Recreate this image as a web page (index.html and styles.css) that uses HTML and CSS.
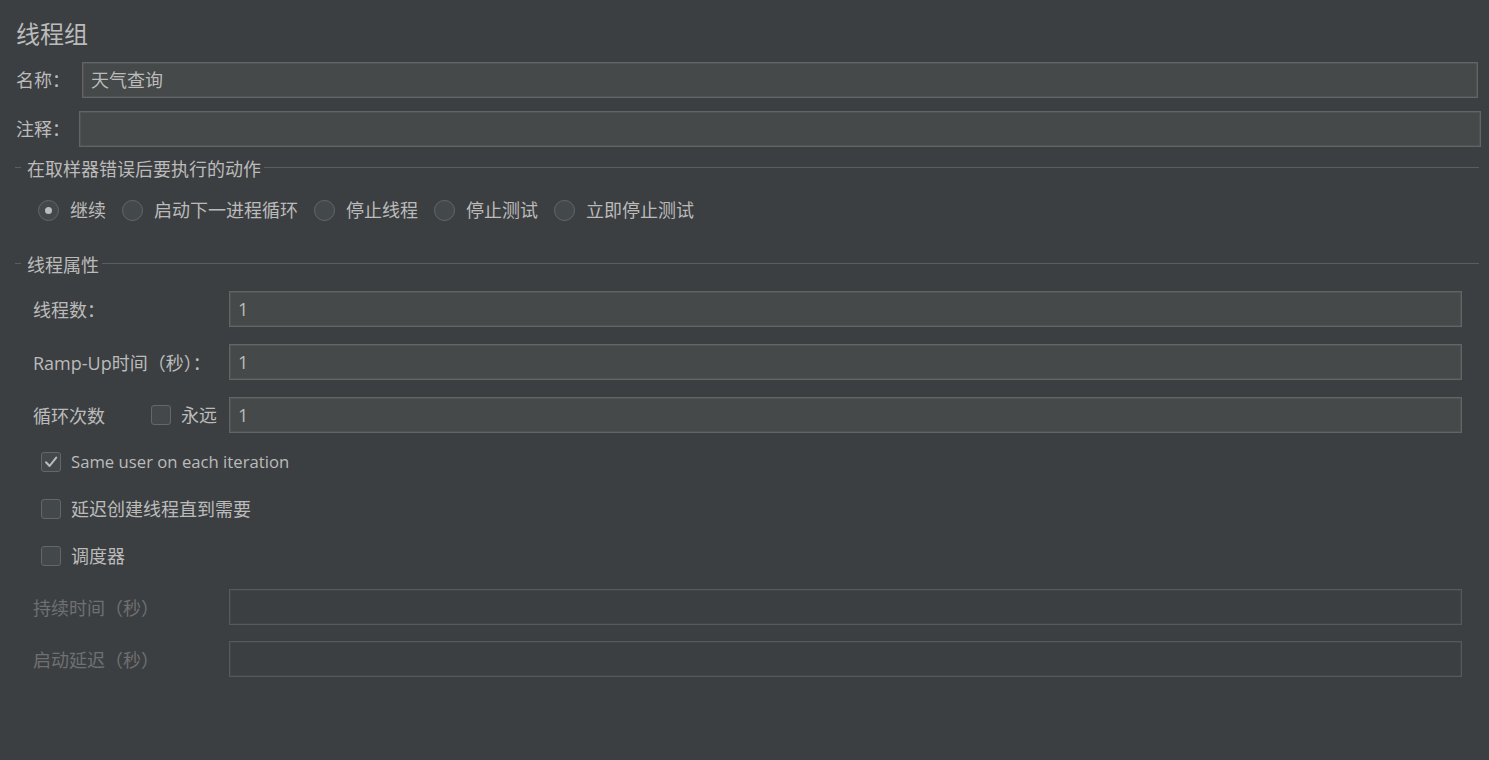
FILE: index.html
```html
<!DOCTYPE html>
<html lang="zh-CN">
<head>
<meta charset="utf-8">
<title>线程组</title>
<link rel="stylesheet" href="styles.css">
</head>
<body>
<div class="panel">
  <div class="title">线程组</div>

  <div class="row row-name">
    <span class="label">名称：</span>
    <div class="field">天气查询</div>
  </div>
  <div class="row row-comment">
    <span class="label">注释：</span>
    <div class="field"></div>
  </div>

  <div class="legend legend-first">
    <span class="legend-dash"></span>
    <span class="legend-text">在取样器错误后要执行的动作</span>
    <span class="legend-line"></span>
  </div>

  <div class="radios">
    <span class="radio-item"><span class="radio checked"></span><span class="radio-label">继续</span></span>
    <span class="radio-item"><span class="radio"></span><span class="radio-label">启动下一进程循环</span></span>
    <span class="radio-item"><span class="radio"></span><span class="radio-label">停止线程</span></span>
    <span class="radio-item"><span class="radio"></span><span class="radio-label">停止测试</span></span>
    <span class="radio-item"><span class="radio"></span><span class="radio-label">立即停止测试</span></span>
  </div>

  <div class="legend legend-second">
    <span class="legend-dash"></span>
    <span class="legend-text">线程属性</span>
    <span class="legend-line"></span>
  </div>

  <div class="props">
    <div class="prop-label">线程数：</div>
    <div class="field">1</div>
    <div class="prop-label">Ramp-Up时间（秒）：</div>
    <div class="field">1</div>
    <div class="prop-label loop">
      <span>循环次数</span>
      <span class="check-inline"><span class="checkbox"></span><span class="check-label">永远</span></span>
    </div>
    <div class="field">1</div>
  </div>

  <div class="checks">
    <div class="check-row">
      <span class="checkbox">
        <svg width="20" height="20" viewBox="0 0 20 20"><path d="M5 10.2 L8.6 14 L15.2 5.6" fill="none" stroke="#bcbcbc" stroke-width="2" stroke-linecap="round" stroke-linejoin="round"/></svg>
      </span>
      <span class="check-label latin">Same user on each iteration</span>
    </div>
    <div class="check-row">
      <span class="checkbox"></span>
      <span class="check-label">延迟创建线程直到需要</span>
    </div>
    <div class="check-row">
      <span class="checkbox"></span>
      <span class="check-label">调度器</span>
    </div>
  </div>

  <div class="props props-disabled">
    <div class="prop-label">持续时间（秒）</div>
    <div class="field"></div>
    <div class="prop-label">启动延迟（秒）</div>
    <div class="field"></div>
  </div>
</div>
</body>
</html>
```

FILE: styles.css
```css
html, body {
  margin: 0;
  padding: 0;
  background: #3c3f41;
}

body {
  width: 1489px;
  height: 760px;
  overflow: hidden;
  color: #bbbbbb;
  font-family: "Open Sans", "Noto Sans CJK SC", sans-serif;
  font-size: 18px;
}

.panel {
  padding-top: 20px;
}

.title {
  height: 28px;
  line-height: 28px;
  font-size: 24px;
  padding-left: 16px;
}

.row {
  display: flex;
  align-items: center;
  height: 36px;
  padding-left: 16px;
}

.row-name {
  margin-top: 14px;
  padding-right: 11px;
}

.row-name .label {
  width: 66px;
}

.row-comment {
  margin-top: 13px;
  padding-right: 8px;
}

.row-comment .label {
  width: 63px;
}

.label {
  flex: none;
  line-height: 36px;
}

.field {
  box-sizing: border-box;
  flex: 1;
  height: 36px;
  line-height: 34px;
  padding-left: 8px;
  background: #45494a;
  border: 1px solid #646464;
  box-shadow: inset 0 0 0 1px #4f5354;
  color: #bbbbbb;
  white-space: nowrap;
  overflow: hidden;
}

.legend {
  display: flex;
  align-items: center;
  height: 20px;
  padding-left: 15px;
  padding-right: 10px;
}

.legend-first {
  margin-top: 10px;
}

.legend-second {
  margin-top: 32px;
}

.legend-dash {
  flex: none;
  width: 6px;
  height: 1px;
  background: #5b5e60;
}

.legend-text {
  flex: none;
  margin-left: 6px;
  margin-right: 3px;
  line-height: 20px;
  padding-top: 4px;
}

.legend-line {
  flex: 1;
  height: 1px;
  background: #5b5e60;
}

.radios {
  display: flex;
  align-items: center;
  height: 22px;
  margin-top: 22px;
  padding-left: 38px;
  gap: 16px;
}

.radio-item {
  display: flex;
  align-items: center;
}

.radio {
  box-sizing: border-box;
  width: 21px;
  height: 21px;
  border-radius: 50%;
  border: 1px solid #666666;
  background: #43494a;
  position: relative;
  flex: none;
}

.radio.checked::after {
  content: "";
  position: absolute;
  left: 6px;
  top: 6px;
  width: 7px;
  height: 7px;
  border-radius: 50%;
  background: #bbbbbb;
}

.radio-label {
  margin-left: 11px;
  line-height: 22px;
}

.props {
  display: grid;
  grid-template-columns: 196px 1fr;
  grid-auto-rows: 36px;
  row-gap: 17px;
  margin-top: 18px;
  padding-left: 33px;
  padding-right: 27px;
}

.prop-label {
  display: flex;
  align-items: center;
  white-space: nowrap;
}

.prop-label.loop .check-inline {
  margin-left: 46px;
}

.check-inline {
  display: flex;
  align-items: center;
}

.checkbox {
  box-sizing: border-box;
  display: inline-flex;
  width: 20px;
  height: 20px;
  border: 1px solid #666666;
  border-radius: 3px;
  background: #43494a;
  flex: none;
  align-items: center;
  justify-content: center;
}

.checkbox svg {
  display: block;
  margin: -1px;
}

.check-label {
  margin-left: 10px;
  line-height: 22px;
}

.check-label.latin {
  font-size: 16.7px;
}

.checks {
  display: flex;
  flex-direction: column;
  gap: 25px;
  margin-top: 18px;
  padding-left: 41px;
}

.check-row {
  display: flex;
  align-items: center;
  height: 22px;
}

.props-disabled {
  margin-top: 22px;
  row-gap: 16px;
}

.props-disabled .prop-label {
  color: #6e7072;
}

.props-disabled .field {
  background: #3c3f41;
  border-color: #56595b;
  box-shadow: inset 0 0 0 1px #434648;
}
```
